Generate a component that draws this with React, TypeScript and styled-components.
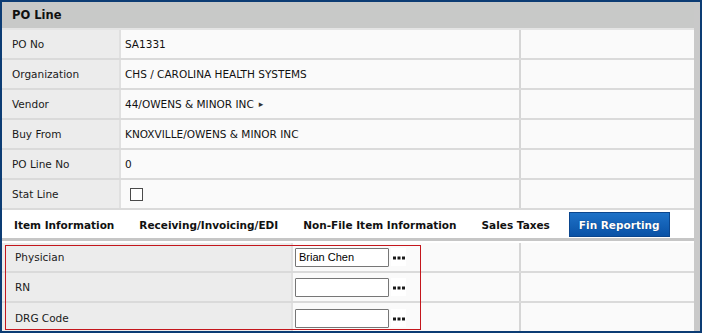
import styled, { createGlobalStyle } from "styled-components";

const GlobalStyle = createGlobalStyle`
  html, body {
    margin: 0;
    padding: 0;
    background: #ffffff;
  }
  body {
    font-family: "DejaVu Sans", Verdana, sans-serif;
  }
`;

interface Field {
  label: string;
  value?: string;
  arrow?: boolean;
  checkbox?: boolean;
}

const lineFields: Field[] = [
  { label: "PO No", value: "SA1331" },
  { label: "Organization", value: "CHS / CAROLINA HEALTH SYSTEMS" },
  { label: "Vendor", value: "44/OWENS & MINOR INC", arrow: true },
  { label: "Buy From", value: "KNOXVILLE/OWENS & MINOR INC" },
  { label: "PO Line No", value: "0" },
  { label: "Stat Line", checkbox: true },
];

const tabs = [
  "Item Information",
  "Receiving/Invoicing/EDI",
  "Non-File Item Information",
  "Sales Taxes",
  "Fin Reporting",
];

const finFields = [
  { label: "Physician", value: "Brian Chen" },
  { label: "RN", value: "" },
  { label: "DRG Code", value: "" },
];

function LookupDots() {
  return (
    <svg width="12" height="4" viewBox="0 0 12 4">
      <rect x="0" y="0.5" width="3" height="3" fill="#1a1a1a" />
      <rect x="4.5" y="0.5" width="3" height="3" fill="#1a1a1a" />
      <rect x="9" y="0.5" width="3" height="3" fill="#1a1a1a" />
    </svg>
  );
}

export default function App() {
  return (
    <>
      <GlobalStyle />
      <Frame>
        <Content>
          <Header>PO Line</Header>
          {lineFields.map((f) => (
            <Row key={f.label} $labelWidth={119} $valueWidth={400}>
              <Label>{f.label}</Label>
              <Value>
                {f.checkbox ? (
                  <Checkbox />
                ) : (
                  <>
                    {f.value}
                    {f.arrow && <Arrow>▸</Arrow>}
                  </>
                )}
              </Value>
              <Spare />
            </Row>
          ))}
          <TabBar>
            {tabs.map((t) => (
              <Tab key={t} $active={t === "Fin Reporting"}>
                {t}
              </Tab>
            ))}
          </TabBar>
          <FinSection>
            {finFields.map((f, i) => (
              <Row
                key={f.label}
                $labelWidth={291}
                $valueWidth={228}
                $last={i === finFields.length - 1}
              >
                <Label $pad={13}>{f.label}</Label>
                <Value $pad={2}>
                  <TextInput defaultValue={f.value} />
                  <Lookup>
                    <LookupDots />
                  </Lookup>
                </Value>
                <Spare />
              </Row>
            ))}
            <Highlight />
          </FinSection>
        </Content>
      </Frame>
    </>
  );
}

const Frame = styled.div`
  box-sizing: border-box;
  width: 702px;
  height: 333px;
  border: 2px solid #0c3c74;
  background: #c9c9c9;
  padding-right: 6px;
  overflow: hidden;
`;

const Content = styled.div`
  background: #ffffff;
  height: 100%;
  display: flex;
  flex-direction: column;
  overflow: hidden;
`;

const Header = styled.div`
  height: 28px;
  flex-shrink: 0;
  box-sizing: border-box;
  padding-left: 10px;
  display: flex;
  align-items: center;
  background: #c8c9c8;
  border-bottom: 2px solid #e4e4e4;
  font-size: 11.5px;
  font-weight: bold;
  color: #111;
`;

const Row = styled.div<{ $labelWidth: number; $valueWidth: number; $last?: boolean }>`
  display: grid;
  grid-template-columns: ${({ $labelWidth, $valueWidth }) =>
    `${$labelWidth}px ${$valueWidth}px 1fr`};
  height: 30px;
  flex-shrink: 0;
  box-sizing: border-box;
  border-bottom: ${({ $last }) => ($last ? "none" : "2px solid #dadada")};
`;

const Label = styled.div<{ $pad?: number }>`
  background: #ececec;
  border-right: 2px solid #e0e0e0;
  display: flex;
  align-items: center;
  padding-left: ${({ $pad }) => $pad ?? 10}px;
  font-size: 10.5px;
  color: #1a1a1a;
`;

const Value = styled.div<{ $pad?: number }>`
  background: #fafafa;
  border-right: 2px solid #d6d6d6;
  display: flex;
  align-items: center;
  padding-left: ${({ $pad }) => $pad ?? 4}px;
  font-size: 10.5px;
  color: #111;
  white-space: nowrap;
`;

const Spare = styled.div`
  background: #fafafa;
`;

const Arrow = styled.span`
  font-size: 9px;
  margin-left: 5px;
  color: #333;
`;

const Checkbox = styled.span`
  display: inline-block;
  width: 11px;
  height: 11px;
  margin-left: 5px;
  border: 1px solid #4a4a4a;
  background: #fff;
`;

const TabBar = styled.div`
  height: 31px;
  flex-shrink: 0;
  box-sizing: border-box;
  display: flex;
  align-items: flex-end;
  background: #ffffff;
  border-bottom: 3px solid #c6c6c6;
  padding-bottom: 1px;
`;

const Tab = styled.div<{ $active?: boolean }>`
  height: 25px;
  box-sizing: border-box;
  display: flex;
  align-items: center;
  padding: ${({ $active }) => ($active ? "0 9px" : "0 12px 0 11px")};
  margin-left: ${({ $active }) => ($active ? "6px" : "0")};
  font-size: 10.5px;
  font-weight: bold;
  white-space: nowrap;
  color: ${({ $active }) => ($active ? "#ffffff" : "#111")};
  background: ${({ $active }) =>
    $active ? "linear-gradient(#1e72c8, #0a52a6)" : "transparent"};
  border: 1px solid ${({ $active }) => ($active ? "#0b468e" : "transparent")};
  text-shadow: ${({ $active }) => ($active ? "0 0 1px #002a66" : "none")};
`;

const FinSection = styled.div`
  position: relative;
  flex: 1;
  display: flex;
  flex-direction: column;
  padding-top: 2px;
`;

const TextInput = styled.input`
  box-sizing: border-box;
  width: 94px;
  height: 19px;
  border: 1px solid #767676;
  border-radius: 1px;
  padding: 0 3px;
  font-family: "Liberation Sans", Arial, sans-serif;
  font-size: 11px;
  color: #000;
  background: #fff;
  outline: none;
`;

const Lookup = styled.span`
  margin-left: 2px;
  width: 15px;
  height: 18px;
  display: flex;
  align-items: flex-end;
  justify-content: center;
  padding-bottom: 6px;
  box-sizing: border-box;
  background: #ffffff;
`;

const Highlight = styled.div`
  position: absolute;
  left: 3px;
  top: 4px;
  width: 414px;
  height: 83px;
  border: 1px solid #c4161c;
  pointer-events: none;
`;
